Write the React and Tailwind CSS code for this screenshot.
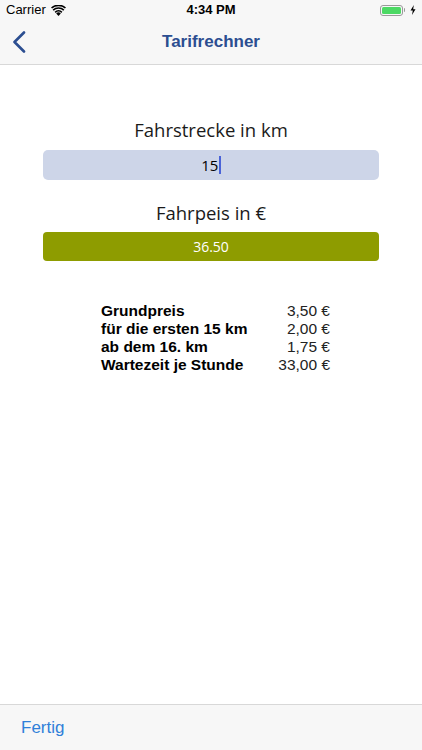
import React from "react";

export default function App() {
  const rows = [
    ["Grundpreis", "3,50 €"],
    ["für die ersten 15 km", "2,00 €"],
    ["ab dem 16. km", "1,75 €"],
    ["Wartezeit je Stunde", "33,00 €"],
  ];
  return (
    <div
      className="w-[422px] h-[750px] bg-white flex flex-col overflow-hidden"
      style={{ fontFamily: '"Open Sans", "Liberation Sans", sans-serif' }}
    >
      {/* Status bar */}
      <div className="h-[20px] bg-[#f7f7f7] flex items-center justify-between px-[6px] text-[13px] text-black relative">
        <div className="flex items-center gap-[5px]">
          <span className="font-normal" style={{ fontFamily: '"Liberation Sans", sans-serif' }}>Carrier</span>
          <svg width="15" height="11" viewBox="0 0 15 11">
            <path d="M7.5 11 L5.2 8.4 A3.4 3.4 0 0 1 9.8 8.4 Z" fill="#000" />
            <path d="M3.6 6.7 A5.6 5.6 0 0 1 11.4 6.7 L10.3 7.9 A4 4 0 0 0 4.7 7.9 Z" fill="#000" />
            <path d="M1.6 4.5 A8.6 8.6 0 0 1 13.4 4.5 L12.3 5.7 A7 7 0 0 0 2.7 5.7 Z" fill="#000" />
            <path d="M0 2.4 A11.2 11.2 0 0 1 15 2.4 L13.9 3.6 A9.6 9.6 0 0 0 1.1 3.6 Z" fill="#000" />
          </svg>
        </div>
        <span
          className="absolute left-1/2 -translate-x-1/2 font-bold text-[13px]"
          style={{ fontFamily: '"Liberation Sans", sans-serif' }}
        >
          4:34 PM
        </span>
        <div className="flex items-center gap-[3px]">
          <div className="w-[23px] h-[11px] rounded-[3px] border border-[#9a9a9a] p-[1px] flex">
            <div className="flex-1 rounded-[1.5px] bg-[#4cd964]" />
          </div>
          <div className="w-[1.5px] h-[4px] bg-[#9a9a9a] rounded-r -ml-[2px]" />
          <svg width="6" height="10" viewBox="0 0 6 10" className="ml-[2px]">
            <path d="M3.8 0 L0.5 5.6 H2.8 L2 10 L5.5 4.2 H3.2 Z" fill="#000" />
          </svg>
        </div>
      </div>

      {/* Nav bar */}
      <div className="h-[45px] bg-[#f7f7f7] border-b border-[#d8d8d8] flex items-center relative">
        <svg width="14" height="22" viewBox="0 0 14 22" className="ml-[12px]">
          <path d="M12 1.5 L2.5 11 L12 20.5" stroke="#2c4e91" strokeWidth="2.6" fill="none" strokeLinecap="round" strokeLinejoin="round" />
        </svg>
        <span
          className="absolute left-1/2 -translate-x-1/2 text-[17px] font-bold text-[#2c4e91]"
          style={{ fontFamily: '"Liberation Sans", sans-serif' }}
        >
          Tarifrechner
        </span>
      </div>

      {/* Content */}
      <div className="flex-1 flex flex-col px-[43px]">
        <div className="mt-[52px] text-center text-[18.5px] text-[#1a1a1a] leading-[26px]">Fahrstrecke in km</div>
        <div className="mt-[7px] h-[30px] rounded-[5px] bg-[#cdd5e8] flex items-center justify-center text-[15px] text-black">
          <span>15</span>
          <span className="w-[1.5px] h-[18px] bg-[#4a63d8] ml-[1px]" />
        </div>
        <div className="mt-[20px] text-center text-[18.5px] text-[#1a1a1a] leading-[26px]">Fahrpeis in €</div>
        <div className="mt-[6px] h-[29px] rounded-[4px] bg-[#8e9c00] flex items-center justify-center text-[14px] text-white">
          36.50
        </div>

        <div className="mt-[41px] ml-[58px] w-[229px] flex flex-col text-[15.5px] leading-[18px]"
          style={{ fontFamily: '"Liberation Sans", sans-serif' }}>
          {rows.map(([l, v]) => (
            <div key={l} className="flex justify-between">
              <span className="font-bold text-black">{l}</span>
              <span className="text-[#222]">{v}</span>
            </div>
          ))}
        </div>
      </div>

      {/* Bottom toolbar */}
      <div className="h-[46px] bg-[#f7f7f7] border-t border-[#d8d8d8] flex items-center px-[21px]">
        <span className="text-[17px] text-[#2f80d9]" style={{ fontFamily: '"Liberation Sans", sans-serif' }}>Fertig</span>
      </div>
    </div>
  );
}
